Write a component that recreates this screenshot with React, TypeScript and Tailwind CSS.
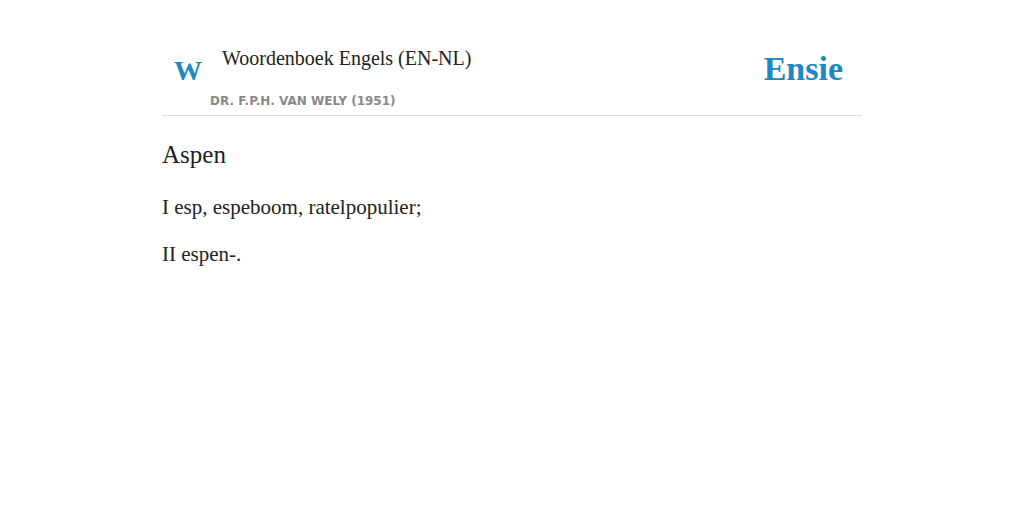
export default function App() {
  const serif = { fontFamily: '"Liberation Serif", "DejaVu Serif", serif' };
  return (
    <div className="min-h-screen bg-white">
      <div className="mx-auto w-[700px] pt-[44px]">
        <div className="flex items-start justify-between border-b border-[#dddddd] pb-[6px]">
          <div className="flex flex-col">
            <div className="flex items-start">
              <div
                className="ml-[12px] mt-[13px] w-[48px] text-[28px] font-bold leading-none text-[#1e88c2]"
                style={serif}
              >
                W
              </div>
              <div className="text-[20px] leading-[28px] text-[#222222]" style={serif}>
                Woordenboek Engels (EN-NL)
              </div>
            </div>
            <div
              className="ml-[48px] mt-[8px] text-[12px] font-bold uppercase leading-[16px] text-[#888888]"
              style={{ fontFamily: '"DejaVu Sans", sans-serif' }}
            >
              Dr. F.P.H. van Wely (1951)
            </div>
          </div>
          <div
            className="mr-[19px] mt-[8px] text-[34px] font-bold leading-none text-[#1e88c2]"
            style={serif}
          >
            Ensie
          </div>
        </div>
        <div className="pt-[24px] text-[#222222]" style={serif}>
          <h1 className="text-[25px] leading-[30px]">Aspen</h1>
          <p className="mt-[23px] text-[21px] leading-[28px]">I esp, espeboom, ratelpopulier;</p>
          <p className="mt-[19px] text-[21px] leading-[28px]">II espen-.</p>
        </div>
      </div>
    </div>
  );
}
